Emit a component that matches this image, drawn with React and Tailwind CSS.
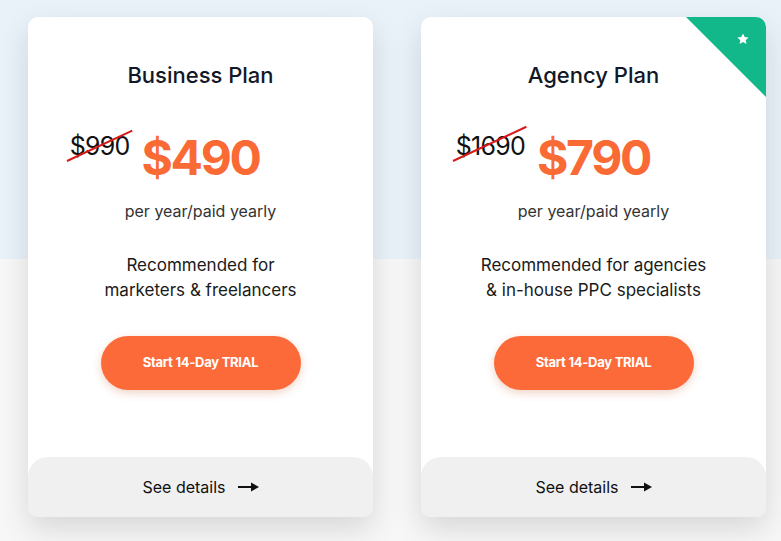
const plans = [
    {
        name: 'Business Plan',
        oldPrice: '$990',
        price: '$490',
        lines: ['Recommended for', 'marketers & freelancers'],
        featured: false,
    },
    {
        name: 'Agency Plan',
        oldPrice: '$1690',
        price: '$790',
        lines: ['Recommended for agencies', '& in-house PPC specialists'],
        featured: true,
    },
];

function Star() {
    return (
        <svg width="14" height="14" viewBox="0 0 24 24" fill="white">
            <path d="M12 2.5l2.9 6.1 6.6.8-4.9 4.6 1.3 6.6L12 17.3l-5.9 3.3 1.3-6.6-4.9-4.6 6.6-.8z" />
        </svg>
    );
}

function Arrow() {
    return (
        <svg width="21" height="10" viewBox="0 0 21 10" fill="#111">
            <rect x="0" y="4" width="15" height="2" />
            <path d="M13 0.5L21 5l-8 4.5z" />
        </svg>
    );
}

function PlanCard({ plan }) {
    return (
        <div className="relative flex h-[500px] w-[345px] flex-col overflow-hidden rounded-[10px] bg-white shadow-[0_12px_30px_rgba(0,0,0,0.13)]">
            {plan.featured ? (
                <div className="absolute right-0 top-0 h-[80px] w-[80px] bg-[#12b78a] [clip-path:polygon(0_0,100%_0,100%_100%)]">
                    <div className="absolute right-[16px] top-[15px]">
                        <Star />
                    </div>
                </div>
            ) : null}

            <h2 className="mt-[43px] text-center text-[22px] font-medium leading-[30px] text-[#111827]">
                {plan.name}
            </h2>

            <div className="mt-[41px] flex justify-center">
                <div className="relative">
                    <div className="absolute right-[calc(100%+12px)] top-0 text-[25px] leading-[30px] tracking-[-0.03em] text-[#111]">
                        {plan.oldPrice}
                        <div className="absolute left-[-3px] top-[14px] h-[2px] w-[calc(100%+12px)] origin-left translate-y-[15px] -rotate-[25deg] bg-[#d71a1a]" />
                    </div>
                    <div className="text-[48px] font-bold leading-[54px] tracking-[-0.05em] text-[#f96a35]">
                        {plan.price}
                    </div>
                </div>
            </div>

            <p className="mt-[15px] text-center text-[16px] leading-[22px] text-[#333]">per year/paid yearly</p>

            <div className="mt-[31px] text-center text-[17px] leading-[25px] text-[#1a1a1a]">
                {plan.lines.map((line) => (
                    <div key={line}>{line}</div>
                ))}
            </div>

            <div className="mt-[33px] flex justify-center">
                <button className="h-[54px] w-[200px] rounded-full bg-[#fd6a39] text-[13px] font-bold tracking-[-0.02em] text-white shadow-[0_3px_8px_rgba(200,80,30,0.25)]">
                    Start 14-Day TRIAL
                </button>
            </div>

            <div className="mt-auto flex h-[60px] items-center justify-center gap-[12px] rounded-t-[20px] bg-[#f0f0f0] text-[16px] text-[#111]">
                <span>See details</span>
                <Arrow />
            </div>
        </div>
    );
}

export default function App() {
    return (
        <div className="h-[541px] w-[781px] overflow-hidden bg-[linear-gradient(to_bottom,#eaf2f9_259px,#f7f7f7_259px)] font-['Inter',sans-serif]">
            <div className="flex gap-[48px] pl-[28px] pt-[17px]">
                {plans.map((plan) => (
                    <PlanCard key={plan.name} plan={plan} />
                ))}
            </div>
        </div>
    );
}
